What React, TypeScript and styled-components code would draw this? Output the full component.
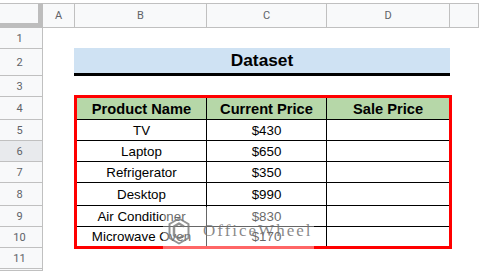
import React from "react";
import styled, { createGlobalStyle } from "styled-components";

const Global = createGlobalStyle`
  html, body {
    margin: 0;
    padding: 0;
    background: #ffffff;
  }
  body {
    width: 479px;
    height: 271px;
    overflow: hidden;
    font-family: "Liberation Sans", Arial, sans-serif;
  }
`;

const Page = styled.div`
  position: relative;
  width: 479px;
  height: 271px;
  padding-top: 3px;
  box-sizing: border-box;
  background: #ffffff;
  overflow: hidden;
`;

const Sheet = styled.div`
  display: grid;
  grid-template-columns: 43px 32px 132px 120px 123px 1fr;
  grid-template-rows: 25px 21px 27px 21px 23px 21px 21px 21px 23px 21px 21px 21px 1fr;
  height: 268px;
`;

const Corner = styled.div`
  grid-column: 1;
  grid-row: 1;
  box-sizing: border-box;
  background: #f8f9fa;
  border-top: 1px solid #c0c0c0;
  border-right: 5px solid #bdbdbd;
  border-bottom: 5px solid #bdbdbd;
`;

const ColHeader = styled.div<{ $col: number }>`
  grid-column: ${(p) => p.$col};
  grid-row: 1;
  box-sizing: border-box;
  display: flex;
  align-items: center;
  justify-content: center;
  background: #f8f9fa;
  border-top: 1px solid #c0c0c0;
  border-right: 1px solid #c0c0c0;
  border-bottom: 1px solid #c0c0c0;
  font-family: Roboto, "Liberation Sans", sans-serif;
  font-size: 11px;
  color: #5f6368;
`;

const RowHeader = styled.div<{ $row: number; $active?: boolean }>`
  grid-column: 1;
  grid-row: ${(p) => p.$row + 1};
  box-sizing: border-box;
  display: flex;
  align-items: center;
  justify-content: center;
  padding-right: 3px;
  background: ${(p) => (p.$active ? "#e8eaed" : "#f8f9fa")};
  border-right: 1px solid #c0c0c0;
  border-bottom: 1px solid #c0c0c0;
  font-family: Roboto, "Liberation Sans", sans-serif;
  font-size: 11px;
  color: #5f6368;
`;

const Title = styled.div`
  grid-column: 3 / 6;
  grid-row: 3;
  margin: -1px 0 0 -1px;
  box-sizing: border-box;
  display: flex;
  align-items: center;
  justify-content: center;
  background: #cfe2f3;
  border-bottom: 3px solid #000000;
  font-family: "Liberation Sans", Arial, sans-serif;
  font-weight: bold;
  font-size: 17.3px;
  color: #000000;
`;

const Table = styled.div`
  grid-column: 3 / 6;
  grid-row: 5 / 12;
  margin: -2px -2px -1px -1px;
  box-sizing: border-box;
  border: 3px solid #ff0000;
  display: grid;
  grid-template-columns: 130px 120px 1fr;
  grid-template-rows: 22px 21px 21px 21px 23px 21px 1fr;
`;

const Cell = styled.div<{ $head?: boolean; $lastCol?: boolean; $lastRow?: boolean }>`
  box-sizing: border-box;
  display: flex;
  align-items: center;
  justify-content: center;
  white-space: nowrap;
  overflow: hidden;
  background: ${(p) => (p.$head ? "#b6d7a8" : "#ffffff")};
  border-right: ${(p) => (p.$lastCol ? "none" : "1px solid #000000")};
  border-bottom: ${(p) => (p.$lastRow ? "none" : "1px solid #000000")};
  font-family: "Liberation Sans", Arial, sans-serif;
  font-weight: ${(p) => (p.$head ? "bold" : "normal")};
  font-size: ${(p) => (p.$head ? "14.67px" : "13.33px")};
  color: #000000;
`;

const Watermark = styled.div`
  position: absolute;
  left: 163px;
  top: 207px;
  width: 151px;
  height: 42px;
  display: flex;
  align-items: center;
  gap: 13px;
  padding: 5px 0 0 5px;
  box-sizing: border-box;
  background: rgba(255, 255, 255, 0.4);
  pointer-events: none;
`;

const WatermarkText = styled.span`
  font-family: "Liberation Serif", "Times New Roman", serif;
  font-size: 17px;
  letter-spacing: 2px;
  color: rgba(115, 115, 115, 0.85);
  line-height: 1;
`;

const Logo = () => (
  <svg width="22" height="28" viewBox="0 0 22 28" fill="none">
    <polygon
      points="11,1.5 20.5,7 20.5,21 11,26.5 1.5,21 1.5,7"
      stroke="rgba(120,120,120,0.8)"
      strokeWidth="2"
      strokeLinejoin="round"
    />
    <polyline
      points="16,9.5 11,6.5 6,9.5 6,18.5 11,21.5 16,18.5"
      stroke="rgba(120,120,120,0.8)"
      strokeWidth="2.5"
      strokeLinejoin="round"
    />
  </svg>
);

const columns = ["A", "B", "C", "D", ""];

const data: [string, string][] = [
  ["TV", "$430"],
  ["Laptop", "$650"],
  ["Refrigerator", "$350"],
  ["Desktop", "$990"],
  ["Air Conditioner", "$830"],
  ["Microwave Oven", "$170"],
];

export default function App() {
  const rowNumbers = Array.from({ length: 12 }, (_, i) => i + 1);
  return (
    <>
      <Global />
      <Page>
        <Sheet>
          <Corner />
          {columns.map((c, i) => (
            <ColHeader key={i} $col={i + 2}>
              {c}
            </ColHeader>
          ))}
          {rowNumbers.map((n) => (
            <RowHeader key={n} $row={n} $active={n === 6}>
              {n < 12 ? n : ""}
            </RowHeader>
          ))}
          <Title>Dataset</Title>
          <Table>
            <Cell $head>Product Name</Cell>
            <Cell $head>Current Price</Cell>
            <Cell $head $lastCol>
              Sale Price
            </Cell>
            {data.map(([name, price], i) => {
              const last = i === data.length - 1;
              return (
                <React.Fragment key={name}>
                  <Cell $lastRow={last}>{name}</Cell>
                  <Cell $lastRow={last}>{price}</Cell>
                  <Cell $lastRow={last} $lastCol />
                </React.Fragment>
              );
            })}
          </Table>
        </Sheet>
        <Watermark>
          <Logo />
          <WatermarkText>OfficeWheel</WatermarkText>
        </Watermark>
      </Page>
    </>
  );
}
